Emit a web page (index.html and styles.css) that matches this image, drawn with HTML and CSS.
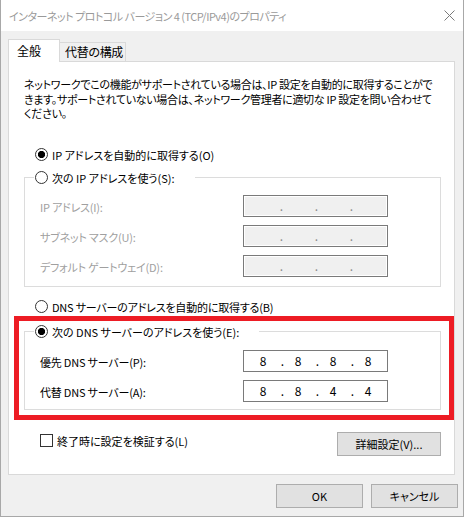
FILE: index.html
```html
<!DOCTYPE html>
<html lang="ja">
<head>
<meta charset="utf-8">
<title>インターネット プロトコル バージョン 4 (TCP/IPv4)のプロパティ</title>
<link rel="stylesheet" href="styles.css">
</head>
<body>
<div class="window">
  <div class="titlebar">
    <span class="title">インターネット プロトコル バージョン 4 (TCP/IPv4)のプロパティ</span>
    <svg class="close" width="11" height="11" viewBox="0 0 11 11"><path d="M0.5 0.5 L10.5 10.5 M10.5 0.5 L0.5 10.5" stroke="#7a7a7a" stroke-width="1" fill="none"/></svg>
  </div>
  <div class="body">
    <div class="tabs">
      <div class="tab active">全般</div>
      <div class="tab inactive">代替の構成</div>
    </div>
    <div class="panel">
      <p class="desc">ネットワークでこの機能がサポートされている場合は、IP 設定を自動的に取得することがで<br>きます。サポートされていない場合は、ネットワーク管理者に適切な IP 設定を問い合わせて<br>ください。</p>

      <div class="opt-row first"><span class="radio checked"></span><span>IP アドレスを自動的に取得する(O)</span></div>

      <fieldset class="group g1">
        <legend><span class="radio"></span><span>次の IP アドレスを使う(S):</span></legend>
        <div class="fields">
          <div class="field disabled"><span>IP アドレス(I):</span><div class="ip off"><span></span><span class="dot">.</span><span></span><span class="dot">.</span><span></span><span class="dot">.</span><span></span></div></div>
          <div class="field disabled"><span>サブネット マスク(U):</span><div class="ip off"><span></span><span class="dot">.</span><span></span><span class="dot">.</span><span></span><span class="dot">.</span><span></span></div></div>
          <div class="field disabled"><span>デフォルト ゲートウェイ(D):</span><div class="ip off"><span></span><span class="dot">.</span><span></span><span class="dot">.</span><span></span><span class="dot">.</span><span></span></div></div>
        </div>
      </fieldset>

      <div class="opt-row third"><span class="radio"></span><span>DNS サーバーのアドレスを自動的に取得する(B)</span></div>

      <fieldset class="group g2">
        <legend><span class="radio checked"></span><span>次の DNS サーバーのアドレスを使う(E):</span></legend>
        <div class="fields">
          <div class="field"><span>優先 DNS サーバー(P):</span><div class="ip"><span>8</span><span class="dot">.</span><span>8</span><span class="dot">.</span><span>8</span><span class="dot">.</span><span>8</span></div></div>
          <div class="field"><span>代替 DNS サーバー(A):</span><div class="ip"><span>8</span><span class="dot">.</span><span>8</span><span class="dot">.</span><span>4</span><span class="dot">.</span><span>4</span></div></div>
        </div>
      </fieldset>

      <div class="bottom-row">
        <div class="check-row"><span class="checkbox"></span><span>終了時に設定を検証する(L)</span></div>
        <div class="btn adv">詳細設定(V)...</div>
      </div>

      <div class="highlight"></div>
    </div>
    <div class="buttons">
      <div class="btn">OK</div>
      <div class="btn">キャンセル</div>
    </div>
  </div>
</div>
</body>
</html>
```
FILE: styles.css
```css
* { box-sizing: border-box; }

body {
  margin: 0;
  background: #ffffff;
  font-family: "Noto Sans CJK JP", "Noto Sans", sans-serif;
  font-size: 11px;
  font-feature-settings: "palt";
  color: #000;
}

.window {
  width: 464px;
  height: 517px;
  border: 1px solid #a8a8a8;
  border-top: none;
  background: #f0f0f0;
  display: flex;
  flex-direction: column;
}

.titlebar {
  height: 31px;
  flex: none;
  background: #ffffff;
  display: flex;
  align-items: center;
  justify-content: space-between;
  padding: 0 8px 0 8px;
}

.title {
  color: #9a9a9a;
  line-height: 16px;
  white-space: nowrap;
  letter-spacing: -0.5px;
}

.close { display: block; }

.body {
  flex: 1;
  padding: 8px 0 0 7px;
  display: flex;
  flex-direction: column;
}

.tabs {
  display: flex;
  align-items: flex-end;
  height: 23px;
  margin-bottom: -1px;
  position: relative;
  z-index: 1;
}

.tab {
  border: 1px solid #d9d9d9;
  border-bottom: none;
  white-space: nowrap;
}

.tab.active {
  width: 52px;
  height: 23px;
  background: #ffffff;
  padding-left: 8px;
  line-height: 21px;
  font-size: 12px;
}

.tab.inactive {
  width: 66px;
  height: 19px;
  border-left: none;
  margin-bottom: 1px;
  padding-left: 5px;
  line-height: 18px;
  background: #f0f0f0;
  font-size: 12px;
  letter-spacing: -0.3px;
}

.panel {
  position: relative;
  width: 447px;
  height: 414px;
  flex: none;
  background: #ffffff;
  border: 1px solid #d9d9d9;
}

.desc {
  margin: 0;
  padding: 15px 0 0 15px;
  line-height: 14.5px;
  white-space: nowrap;
  letter-spacing: -0.3px;
}

.opt-row {
  display: flex;
  align-items: center;
  gap: 4px;
  height: 16px;
  padding-left: 26px;
  white-space: nowrap;
}

.opt-row.first { margin-top: 26px; }
.opt-row.third { margin-top: 12px; letter-spacing: -0.2px; }

.radio {
  width: 13px;
  height: 13px;
  flex: none;
  border: 1px solid #333333;
  border-radius: 50%;
  background: #ffffff;
}

.radio.checked {
  background: radial-gradient(circle, #000000 0 3.3px, #ffffff 3.9px);
}

.group {
  margin: 7px 0 0 15px;
  width: 417px;
  border: 1px solid #dcdcdc;
  padding: 9px 0 9px 0;
  min-inline-size: auto;
}

.group.g2 {
  margin-top: 9px;
  padding: 10px 0 7px 0;
}

.group legend {
  display: flex;
  align-items: center;
  gap: 4px;
  height: 16px;
  margin-left: 9px;
  padding: 0 20px 0 1px;
  white-space: nowrap;
}

.fields {
  display: flex;
  flex-direction: column;
  gap: 8px;
  padding-left: 15px;
}

.field {
  display: grid;
  grid-template-columns: 203px 145px;
  align-items: center;
  height: 22px;
  white-space: nowrap;
}

.field.disabled { color: #a0a0a0; }

.field > span { padding-top: 2px; letter-spacing: -0.2px; }

.ip {
  height: 22px;
  border: 1px solid #7a7a7a;
  background: #ffffff;
  display: grid;
  grid-template-columns: 28px 7px 28px 7px 28px 7px 28px;
  align-items: center;
  padding-left: 5px;
  color: #000;
  text-align: center;
  line-height: 20px;
  font-size: 12px;
}

.ip.off {
  background: #f0f0f0;
  box-shadow: inset 0 0 0 1px #ffffff;
  color: #8a8a8a;
  padding-left: 4px;
}

.ip .dot {
  text-align: right;
}

.bottom-row {
  display: flex;
  justify-content: space-between;
  align-items: flex-start;
  margin-top: 22px;
  padding: 0 13px 0 31px;
}

.check-row {
  display: flex;
  align-items: center;
  gap: 4px;
  height: 16px;
  margin-top: 1px;
  white-space: nowrap;
}

.checkbox {
  width: 13px;
  height: 13px;
  border: 1px solid #333333;
  background: #ffffff;
}

.btn {
  height: 24px;
  background: #e1e1e1;
  border: 1px solid #adadad;
  display: flex;
  align-items: center;
  justify-content: center;
  white-space: nowrap;
}

.btn.adv { width: 104px; }

.buttons {
  display: flex;
  justify-content: flex-end;
  gap: 8px;
  margin-top: 9px;
  padding-right: 5px;
}

.buttons .btn { width: 87px; }

.highlight {
  position: absolute;
  left: 5px;
  top: 254px;
  width: 440px;
  height: 104px;
  border: 5px solid #ed1c24;
  pointer-events: none;
}
```
